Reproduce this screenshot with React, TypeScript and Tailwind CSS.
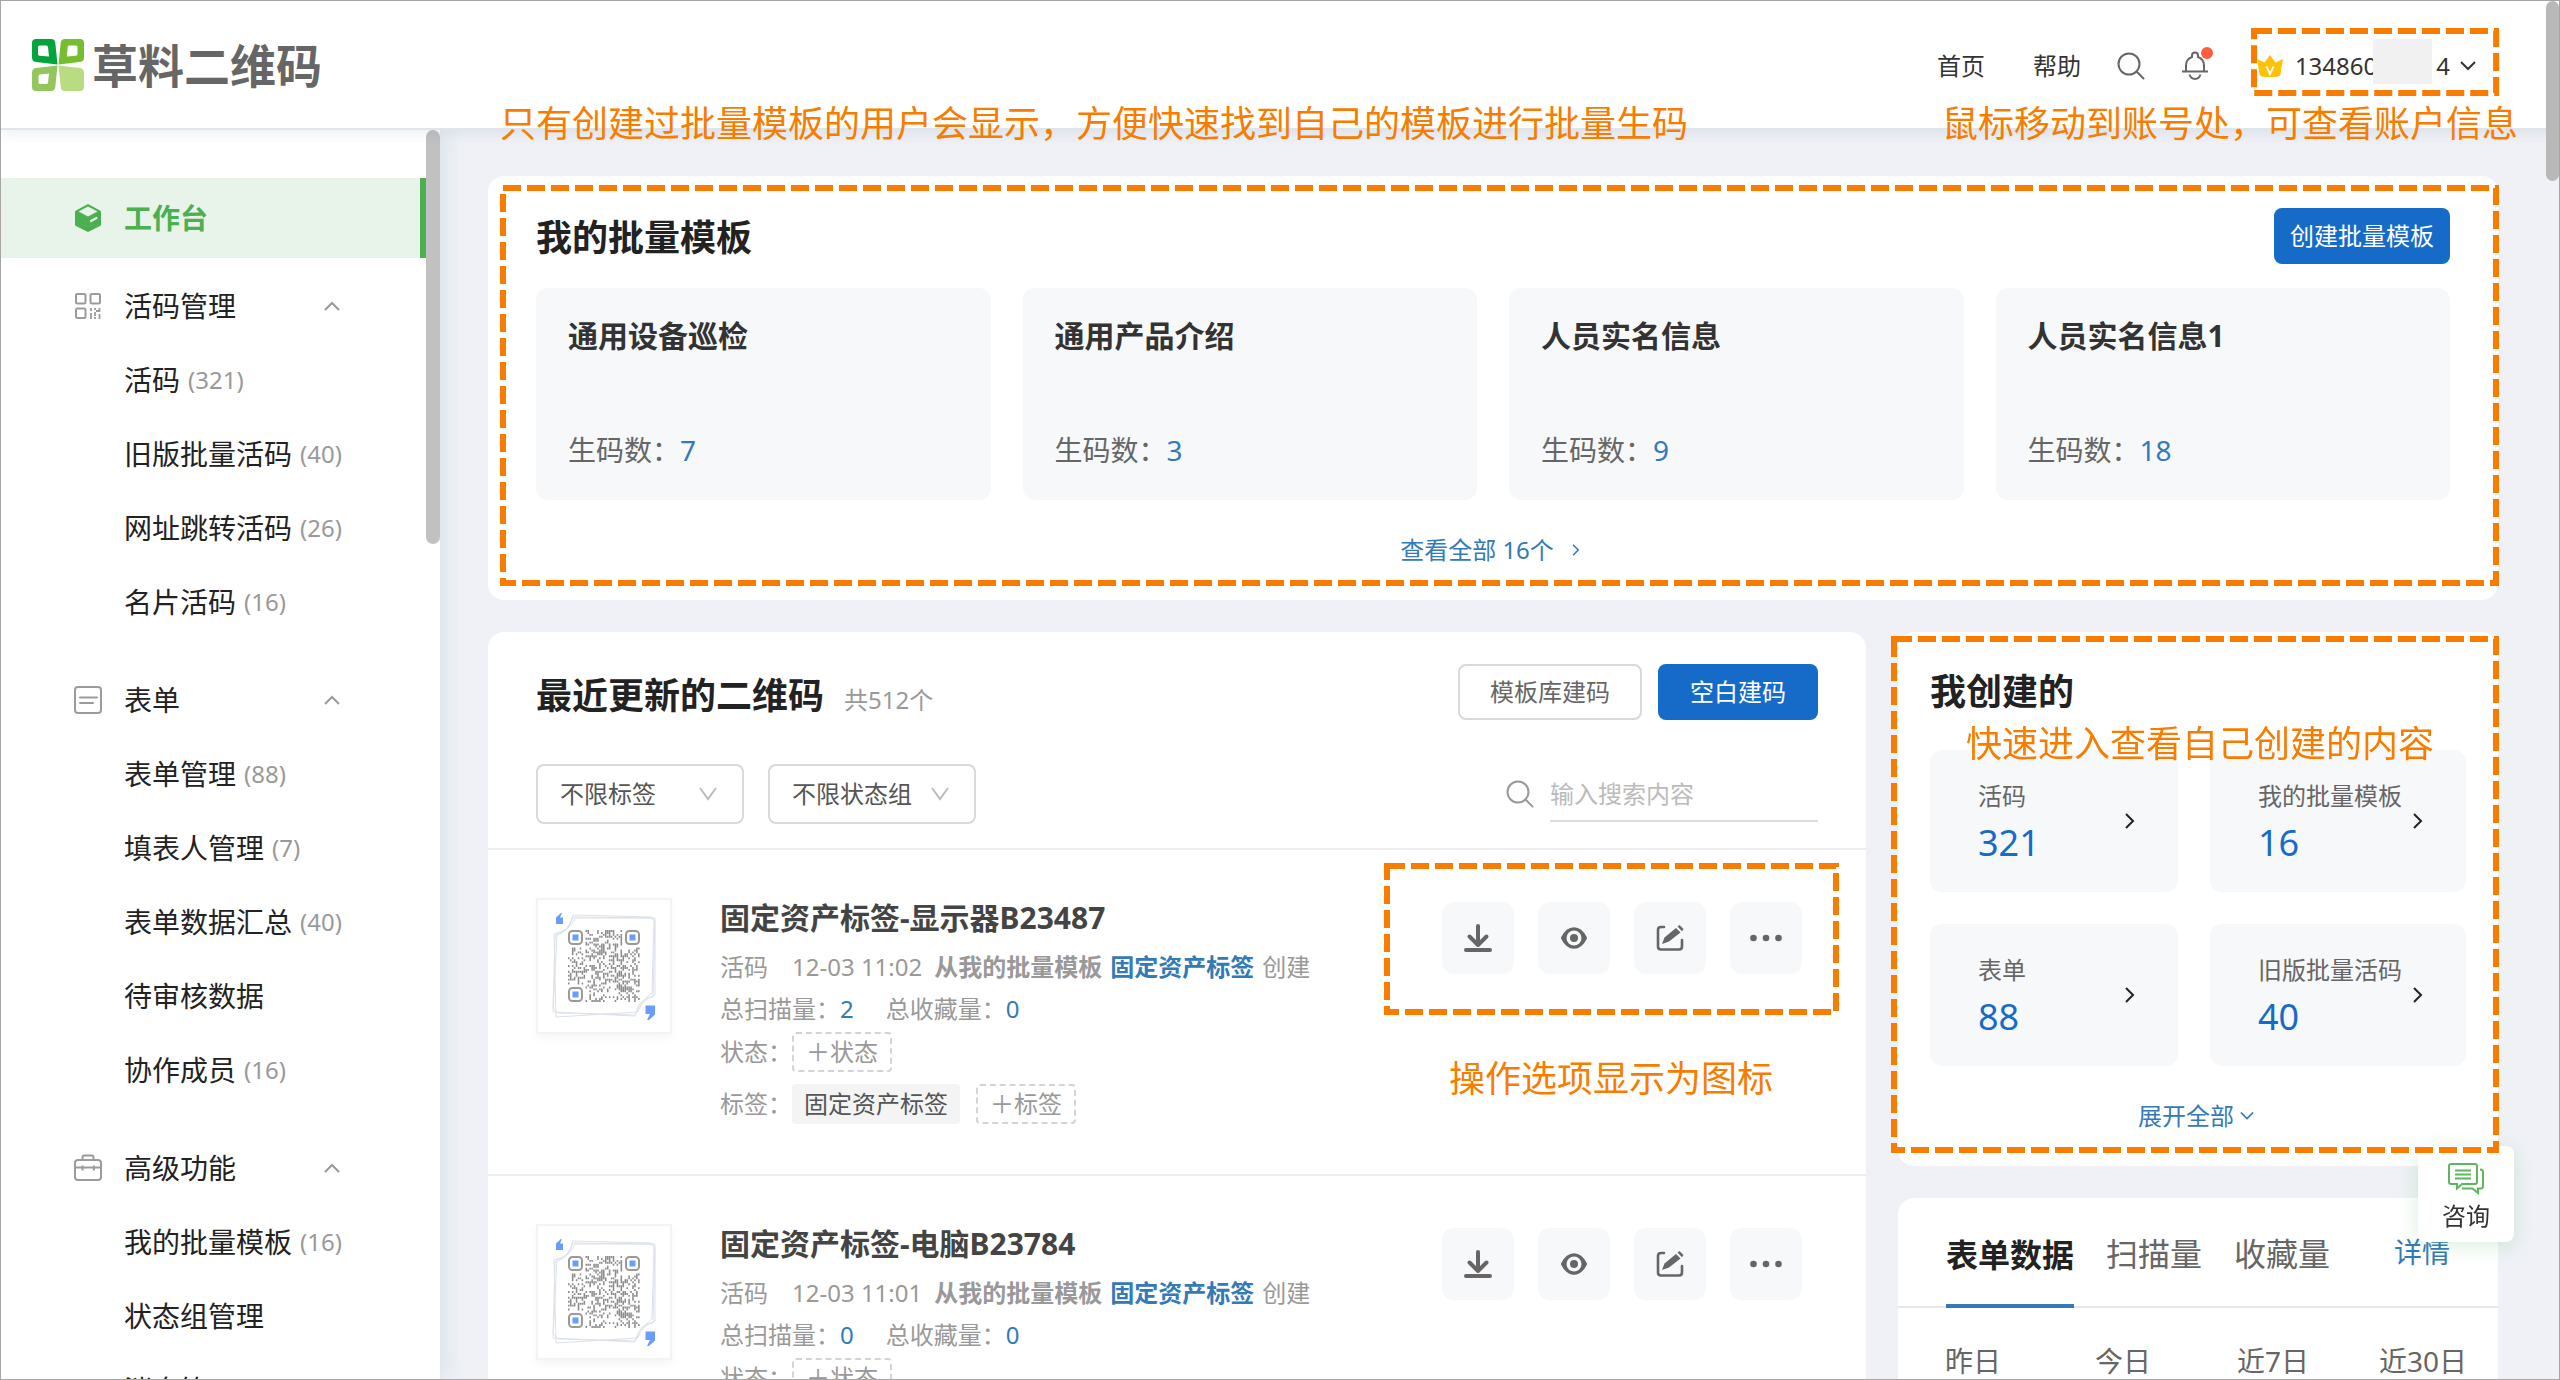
import type { ReactNode } from "react";

type NavItem = { label: string; count?: number };
type NavGroup = { label: string; icon: ReactNode; items: NavItem[] };

const NAV: NavGroup[] = [
  {
    label: "活码管理",
    icon: <CodeIcon />,
    items: [
      { label: "活码", count: 321 },
      { label: "旧版批量活码", count: 40 },
      { label: "网址跳转活码", count: 26 },
      { label: "名片活码", count: 16 },
    ],
  },
  {
    label: "表单",
    icon: <FormIcon />,
    items: [
      { label: "表单管理", count: 88 },
      { label: "填表人管理", count: 7 },
      { label: "表单数据汇总", count: 40 },
      { label: "待审核数据" },
      { label: "协作成员", count: 16 },
    ],
  },
  {
    label: "高级功能",
    icon: <ToolboxIcon />,
    items: [{ label: "我的批量模板", count: 16 }, { label: "状态组管理" }, { label: "消息箱" }],
  },
];

const TEMPLATES = [
  { name: "通用设备巡检", count: 7 },
  { name: "通用产品介绍", count: 3 },
  { name: "人员实名信息", count: 9 },
  { name: "人员实名信息1", count: 18 },
];

const CODES = [
  { name: "固定资产标签-显示器B23487", time: "12-03 11:02", scans: 2, favs: 0 },
  { name: "固定资产标签-电脑B23784", time: "12-03 11:01", scans: 0, favs: 0 },
];

const CREATED = [
  { label: "活码", count: 321 },
  { label: "我的批量模板", count: 16 },
  { label: "表单", count: 88 },
  { label: "旧版批量活码", count: 40 },
];

/* ---------- icons ---------- */

function Logo() {
  return (
    <svg viewBox="0 0 52 52" className="size-[52px] shrink-0" aria-hidden="true">
      <path fillRule="evenodd" fill="#04a43c" d="M4 0H19Q23 0 23.300 4L25.500 25.500L4 23Q0 22.500 0 18.500V4Q0 0 4 0ZM7.500 6.500Q6 6.500 6 8V15Q6 16.500 7.500 16.700L17 17.500L16 8Q15.800 6.500 14.500 6.500Z" />
      <path fillRule="evenodd" fill="#76be2f" d="M33 0H48Q52 0 52 4V18.500Q52 22.500 48 23L26.500 25.500L28.700 4Q29 0 33 0ZM37 6.500Q35.800 6.500 35.700 8L34.800 17.500L44 16.700Q45.500 16.500 45.500 15V8Q45.500 6.500 44 6.500Z" />
      <path fillRule="evenodd" fill="#93c65c" d="M25.500 26.500L23.300 48Q23 52 19 52H4Q0 52 0 48V33.500Q0 29.500 4 29ZM17 34.500L8 35.500Q6.500 35.800 6.500 37V43.500Q6.500 45 8 45H14.500Q15.800 45 16 43.500Z" />
      <path fill="#b9dc80" d="M26.500 26.500L48 29Q52 29.500 52 33.500V48Q52 52 48 52H33Q29 52 28.700 48Z" />
    </svg>
  );
}

function CubeIcon() {
  return (
    <svg viewBox="0 0 28 28" className="size-7 shrink-0" aria-hidden="true">
      <path fill="#4caf50" d="M14 0L26 6.500Q27 7 27 8V20.500Q27 21.500 26 22L14 28L2 22Q1 21.500 1 20.500V8Q1 7 2 6.500Z" />
      <path fill="#e8f3ea" d="M14 2.500L23.500 7.500L14 12.500L4.500 7.500Z" />
      <path stroke="#e8f3ea" strokeWidth="2.200" strokeLinecap="round" d="M17 17L22.500 14" />
    </svg>
  );
}

function CodeIcon() {
  return (
    <svg viewBox="0 0 28 28" className="size-7 shrink-0" fill="none" stroke="#9b9b9b" strokeWidth="2" aria-hidden="true">
      <rect x="2" y="2" width="9.500" height="9.500" rx="1.500" />
      <rect x="16.500" y="2" width="9.500" height="9.500" rx="1.500" />
      <rect x="2" y="16.500" width="9.500" height="9.500" rx="1.500" />
      <path d="M17 16v3M17 21v6M21 16v2M21 20v4M21 25v2M25.500 16v4M25.500 22v5M22 19h3" strokeWidth="1.800" />
    </svg>
  );
}

function FormIcon() {
  return (
    <svg viewBox="0 0 28 28" className="size-7 shrink-0" fill="none" stroke="#9b9b9b" strokeWidth="2" aria-hidden="true">
      <rect x="1" y="1" width="26" height="26" rx="3" />
      <path d="M6 11.500h17M6 17h13" strokeLinecap="round" />
    </svg>
  );
}

function ToolboxIcon() {
  return (
    <svg viewBox="0 0 28 28" className="size-7 shrink-0" fill="none" stroke="#9b9b9b" strokeWidth="2" aria-hidden="true">
      <rect x="1" y="6" width="26" height="20" rx="3" />
      <path d="M8.500 6V3q0-1.500 1.500-1.500h8q1.500 0 1.500 1.500v3M1 13.500h26M8.500 11.500v5M20 11.500v5" />
    </svg>
  );
}

function Chevron({ d, className }: { d: string; className: string }) {
  return (
    <svg viewBox="0 0 16 16" className={className} fill="none" stroke="currentColor" strokeWidth="2" aria-hidden="true">
      <path d={d} />
    </svg>
  );
}

const UP = "M1 12L8 5L15 12";
const DOWN = "M1 4L8 11L15 4";
const RIGHT = "M4 1L11 8L4 15";

function SearchIcon({ className }: { className: string }) {
  return (
    <svg viewBox="0 0 28 28" className={className} fill="none" stroke="currentColor" strokeWidth="2" aria-hidden="true">
      <circle cx="12" cy="12" r="10.500" />
      <path d="M19.500 19.500L26.500 26.500" strokeLinecap="round" />
    </svg>
  );
}

function BellIcon() {
  return (
    <svg viewBox="0 0 28 30" className="h-[30px] w-7" fill="none" stroke="#666" strokeWidth="2" aria-hidden="true">
      <path d="M5 20V14.500Q5 8 11 6V4.500Q11 1.500 14 1.500Q17 1.500 17 4.500V6Q23 8 23 14.500V20" />
      <path d="M1 20.500H27M8.500 23.500Q10 28 14 28Q18 28 19.500 23.500" />
    </svg>
  );
}

function CrownIcon() {
  return (
    <svg viewBox="0 0 26 22" className="h-[22px] w-[26px] shrink-0" aria-hidden="true">
      <path fill="#ffc107" d="M13 0L18.500 7.500L26 4L23.500 19Q23 21 21 21.500Q13 22.500 5 21.500Q3 21 2.500 19L0 4L7.500 7.500Z" />
      <path fill="none" stroke="#fff" strokeWidth="1.800" d="M9.500 11.500L13 19L16.500 11.500" />
    </svg>
  );
}

function ChatIcon() {
  return (
    <svg viewBox="0 0 36 32" className="h-8 w-9" fill="none" stroke="#5cb85f" strokeWidth="2" aria-hidden="true">
      <path d="M3 1H27Q29 1 29 3V19Q29 21 27 21H14L9 25.500V21H3Q1 21 1 19V3Q1 1 3 1Z" />
      <path d="M7 7.500H23M7 11.500H23M7 15.500H23M32 6.500Q35 6.500 35 9V23Q35 25.500 33 25.500H30V30L24.500 25.500H14" />
    </svg>
  );
}

const ACTIONS = [
  {
    label: "下载",
    icon: (
      <path d="M14 2V20M5.500 12.500L14 21L22.500 12.500M2 26H26" fill="none" stroke="#666" strokeWidth="4" strokeLinecap="round" strokeLinejoin="round" />
    ),
  },
  {
    label: "预览",
    icon: (
      <>
        <path d="M2.500 14Q7 4.800 14 4.800Q21 4.800 25.500 14Q21 23.200 14 23.200Q7 23.200 2.500 14Z" fill="#666" stroke="#666" strokeWidth="3" strokeLinejoin="round" />
        <circle cx="14" cy="14" r="7.500" fill="#f7f8fa" />
        <circle cx="14" cy="14" r="4" fill="#666" />
      </>
    ),
  },
  {
    label: "编辑",
    icon: (
      <>
        <path d="M8 3H5Q2 3 2 6V22.500Q2 25.500 5 25.500H23Q26 25.500 26 22.500V16" fill="none" stroke="#666" strokeWidth="2.600" strokeLinecap="round" />
        <path d="M20 4L24.500 8.500L13 17.500L6 20L8.500 13.500Z" fill="#666" />
        <path d="M21.500 2.500L23.500 1L27.500 5L26 7.300Z" fill="#666" />
      </>
    ),
  },
  {
    label: "更多",
    icon: (
      <g fill="#666">
        <circle cx="1.500" cy="14" r="3.300" />
        <circle cx="14" cy="14" r="3.300" />
        <circle cx="26.500" cy="14" r="3.300" />
      </g>
    ),
  },
];

// fixed-seed module pattern for the code thumbnails
const QR_SIZE = 37;
const QR_PATH = (() => {
  let seed = 20231;
  let d = "";
  for (let y = 0; y < QR_SIZE; y++) {
    for (let x = 0; x < QR_SIZE; x++) {
      seed = (seed * 1103515245 + 12345) % 2147483648;
      const corner = (x < 9 && y < 9) || (x > 27 && y < 9) || (x < 9 && y > 27);
      if (!corner && seed / 2147483648 < 0.4) d += `M${x} ${y}h.8v1h-.8z`;
    }
  }
  return d;
})();

function QrThumb() {
  return (
    <svg viewBox="0 0 132 132" className="size-[132px]" aria-hidden="true">
      <g fill="none" stroke="#dce1ea" strokeWidth="1">
        <path d="M35 15L113 17L117 22V95Q104 99 97 115L20 113L15 108L17 36Q31 32 35 15Z" />
        <path d="M37 18H112L116 20L114 93Q103 101 100 112L18 117L16 34Q33 30 37 18Z" />
        <path d="M35 17L117 18L115 97Q101 97 97 116L15 112L19 33Q30 34 35 17Z" />
      </g>
      <g transform="translate(30 30) scale(1.946)">
        <path d={QR_PATH} fill="#8c8c8c" />
      </g>
      {[
        [30, 30],
        [87, 30],
        [30, 87],
      ].map(([x, y]) => (
        <g key={`${x}-${y}`}>
          <rect x={x + 1} y={y + 1} width="13" height="13" rx="3.500" fill="#fff" stroke="#999" strokeWidth="2" />
          <rect x={x + 4.500} y={y + 4.500} width="6" height="6" fill="#6b9bff" />
        </g>
      ))}
      <path fill="#6b9bff" d="M18 24V17.500L23 13H24L22 17.500H25V24ZM107.500 105.500H117V114.500L111 120H109L112 114H107.500Z" />
    </svg>
  );
}

/* ---------- callouts ---------- */

function DashedBox({ className }: { className: string }) {
  return (
    <div className={`pointer-events-none absolute z-30 ${className}`}>
      <svg className="size-full overflow-visible" aria-hidden="true">
        <rect width="100%" height="100%" fill="none" stroke="#f77c00" strokeWidth="6" strokeDasharray="18 6" />
      </svg>
    </div>
  );
}

function Note({ className, children }: { className: string; children: ReactNode }) {
  return (
    <p className={`pointer-events-none absolute z-30 text-4xl leading-[48px] whitespace-nowrap text-[#f77c00] ${className}`}>
      {children}
    </p>
  );
}

/* ---------- page parts ---------- */

function Header() {
  return (
    <header className="relative z-20 flex h-[129px] shrink-0 items-center justify-between border-b-2 border-[#dfe5ea] bg-white pr-[83px] pl-[31px] shadow-[0_4px_12px_rgba(30,60,90,0.08)]">
      <a href="#home" className="flex items-center gap-2">
        <Logo />
        <span className="text-[46px] leading-[48px] font-bold text-[#666]">草料二维码</span>
      </a>
      <div className="flex items-center pt-[2px] text-2xl text-[#333]">
        <a href="#index" className="mr-12">首页</a>
        <a href="#help" className="mr-9">帮助</a>
        <button type="button" aria-label="搜索" className="mr-9 text-[#666]">
          <SearchIcon className="size-7" />
        </button>
        <button type="button" aria-label="通知" className="relative mr-12">
          <BellIcon />
          <span className="absolute -top-1 -right-1 size-3 rounded-full bg-[#ff5b41]" />
        </button>
        <button type="button" className="relative flex h-[62px] items-center">
          <CrownIcon />
          <span className="ml-3">134860</span>
          <span className="-mt-2 -ml-1 h-[45px] w-[59px] bg-[#f1f1f1]" />
          <span className="ml-1">4</span>
          <Chevron d={DOWN} className="ml-[10px] size-4" />
          <DashedBox className="-top-1 -right-5 bottom-1 -left-[3px]" />
        </button>
      </div>
      <Note className="top-[99px] left-[499px]">只有创建过批量模板的用户会显示，方便快速找到自己的模板进行批量生码</Note>
      <Note className="top-[99px] right-[41px]">鼠标移动到账号处，可查看账户信息</Note>
    </header>
  );
}

function Sidebar() {
  return (
    <aside className="relative z-10 flex w-[439px] shrink-0 overflow-hidden bg-white shadow-[6px_0_18px_rgba(170,200,205,0.3)]">
      <nav className="flex-1 pt-12 text-[28px] text-[#222]">
        <a href="#workbench" className="flex h-20 items-center gap-[22px] border-r-6 border-[#4caf50] bg-[#e8f3ea] pl-[73px] font-bold text-[#4caf50]">
          <CubeIcon />
          工作台
        </a>
        <div className="mt-[11px] flex flex-col gap-6">
          {NAV.map((g) => (
            <div key={g.label}>
              <button type="button" className="flex h-[74px] w-full items-center gap-[22px] pr-[86px] pl-[73px]">
                {g.icon}
                {g.label}
                <Chevron d={UP} className="ml-auto size-4 text-[#999]" />
              </button>
              {g.items.map((it) => (
                <a key={it.label} href="#nav" className="flex h-[74px] items-center pl-[123px]">
                  {it.label}
                  {it.count !== undefined && <span className="ml-2 text-2xl text-[#999]">({it.count})</span>}
                </a>
              ))}
            </div>
          ))}
        </div>
      </nav>
      <div className="h-[414px] w-[14px] rounded-full bg-[#c1c1c1]" />
    </aside>
  );
}

function Templates() {
  return (
    <section className="relative rounded-2xl bg-white px-12 pt-8">
      <DashedBox className="top-3 right-[2px] bottom-[17px] left-[15px]" />
      <div className="flex h-14 items-center justify-between">
        <h2 className="pt-1 text-4xl font-bold text-[#222]">我的批量模板</h2>
        <button type="button" className="h-14 rounded-lg bg-[#176bc8] px-4 text-2xl text-white">创建批量模板</button>
      </div>
      <div className="mt-6 grid grid-cols-4 gap-8">
        {TEMPLATES.map((t) => (
          <a key={t.name} href="#template" className="flex h-[212px] flex-col justify-between rounded-xl bg-[#f7f8fa] p-8">
            <h3 className="text-3xl leading-8 font-bold text-[#333]">{t.name}</h3>
            <p className="text-[28px] leading-9 text-[#666]">
              生码数：<span className="text-[#337ab7]">{t.count}</span>
            </p>
          </a>
        ))}
      </div>
      <div className="flex h-[100px] items-center justify-center">
        <a href="#all" className="flex items-center gap-4 pr-1 text-2xl text-[#337ab7]">
          查看全部 16个
          <Chevron d={RIGHT} className="size-3" />
        </a>
      </div>
    </section>
  );
}

function Filter({ id, label }: { id: string; label: string }) {
  return (
    <div className="relative">
      <select id={id} aria-label={label} className="h-[60px] w-52 appearance-none rounded-lg border-2 border-[#d9d9d9] bg-white pl-[22px] text-2xl text-[#555]">
        <option>{label}</option>
      </select>
      <svg viewBox="0 0 18 14" className="pointer-events-none absolute top-[23px] right-[27px] h-[14px] w-[18px]" fill="none" stroke="#bbb" strokeWidth="2" aria-hidden="true">
        <path d="M1 1L9 12L17 1" />
      </svg>
    </div>
  );
}

function CodeRow({ code, annotated }: { code: (typeof CODES)[number]; annotated: boolean }) {
  return (
    <li className="relative flex border-t-2 border-[#ebedf0] pt-12 pr-16 pb-[50px] pl-12">
      <div className="size-[136px] shrink-0 border-2 border-[#f3f3f3] shadow-[0_4px_8px_rgba(0,0,0,0.04)]">
        <QrThumb />
      </div>
      <div className="ml-12 flex-1 text-2xl text-[#999]">
        <h3 className="mb-2 text-3xl leading-10 font-bold text-[#444]">{code.name}</h3>
        <p className="flex gap-2 leading-[42px]">
          <span className="mr-4">活码</span>
          <span className="mr-1">{code.time}</span>
          <span className="font-bold">从我的批量模板</span>
          <a href="#template" className="font-bold text-[#337ab7]">固定资产标签</a>
          <span>创建</span>
        </p>
        <p className="flex gap-8 leading-[42px]">
          <span>总扫描量：<b className="font-normal text-[#337ab7]">{code.scans}</b></span>
          <span>总收藏量：<b className="font-normal text-[#337ab7]">{code.favs}</b></span>
        </p>
        <div className="mt-[2px] flex h-10 items-center">
          <span className="w-[72px]">状态：</span>
          <button type="button" className="h-10 rounded border-2 border-dashed border-[#d4d4d4] px-3 leading-9">＋状态</button>
        </div>
        <div className="mt-3 flex h-10 items-center">
          <span className="w-[72px]">标签：</span>
          <span className="mr-4 h-10 rounded bg-[#f4f4f4] px-3 leading-10 text-[#555]">固定资产标签</span>
          <button type="button" className="h-10 rounded border-2 border-dashed border-[#d4d4d4] px-3 leading-9">＋标签</button>
        </div>
      </div>
      <div className="relative mt-1 flex h-[72px] gap-6">
        {ACTIONS.map((a) => (
          <button key={a.label} type="button" aria-label={a.label} className="flex size-[72px] items-center justify-center rounded-xl bg-[#f7f8fa]">
            <svg viewBox="0 0 28 28" className="size-7 overflow-visible" aria-hidden="true">{a.icon}</svg>
          </button>
        ))}
        {annotated && (
          <>
            <DashedBox className="-top-9 -right-[34px] -bottom-[38px] -left-[55px]" />
            <Note className="top-[153px] left-[7px]">操作选项显示为图标</Note>
          </>
        )}
      </div>
    </li>
  );
}

function RecentCodes() {
  return (
    <section className="min-w-0 flex-1 rounded-2xl bg-white">
      <div className="px-12 pt-8 pb-6">
        <div className="flex h-14 items-center gap-4">
          <div className="mr-auto flex items-baseline gap-5 pt-2">
            <h2 className="text-4xl leading-[44px] font-bold text-[#222]">最近更新的二维码</h2>
            <span className="text-2xl text-[#999]">共512个</span>
          </div>
          <button type="button" className="h-14 w-[184px] rounded-lg border-2 border-[#d9d9d9] text-2xl text-[#666]">模板库建码</button>
          <button type="button" className="h-14 w-40 rounded-lg bg-[#176bc8] text-2xl text-white">空白建码</button>
        </div>
        <div className="mt-11 flex h-[60px] items-center gap-6">
          <Filter id="tag" label="不限标签" />
          <Filter id="status" label="不限状态组" />
          <label className="ml-auto flex items-center gap-4">
            <SearchIcon className="size-7 text-[#999]" />
            <input type="search" aria-label="搜索" placeholder="输入搜索内容" className="h-14 w-[268px] border-b-2 border-[#d9dde3] bg-transparent text-2xl placeholder:text-[#bbb]" />
          </label>
        </div>
      </div>
      <ul>
        {CODES.map((c, i) => (
          <CodeRow key={c.name} code={c} annotated={i === 0} />
        ))}
      </ul>
    </section>
  );
}

function Created() {
  return (
    <section className="relative rounded-2xl bg-white px-8 pt-9">
      <DashedBox className="top-[7px] right-[2px] bottom-4 -left-1" />
      <Note className="top-[88px] left-[68px]">快速进入查看自己创建的内容</Note>
      <h2 className="text-4xl leading-[48px] font-bold text-[#222]">我创建的</h2>
      <div className="mt-[34px] grid grid-cols-[31fr_32fr] gap-8">
        {CREATED.map((c) => (
          <a key={c.label} href="#created" className="flex h-[142px] items-center justify-between rounded-xl bg-[#f7f8fa] pr-10 pl-12">
            <div className="whitespace-nowrap">
              <p className="text-2xl leading-[44px] text-[#666]">{c.label}</p>
              <p className="text-4xl leading-[50px] text-[#176bc8]">{c.count}</p>
            </div>
            <Chevron d={RIGHT} className="size-4 shrink-0 text-[#222]" />
          </a>
        ))}
      </div>
      <div className="flex h-[100px] items-center justify-center">
        <button type="button" className="flex items-center gap-[6px] pr-1 text-2xl text-[#337ab7]">
          展开全部
          <Chevron d={DOWN} className="size-[14px]" />
        </button>
      </div>
    </section>
  );
}

function FormStats() {
  return (
    <section className="rounded-2xl bg-white">
      <div className="flex items-center gap-8 border-b-2 border-[#e5e7ea] px-12 text-[32px] text-[#666]">
        <button type="button" className="-mb-[2px] h-[110px] border-b-4 border-[#337ab7] pt-2 font-bold text-[#222]">表单数据</button>
        <button type="button" className="pt-1">扫描量</button>
        <button type="button" className="pt-1">收藏量</button>
        <a href="#detail" className="ml-auto text-[28px] text-[#337ab7]">详情</a>
      </div>
      <div className="grid h-[300px] grid-cols-4 text-center text-[28px] leading-[106px] text-[#666]">
        <span>昨日</span>
        <span>今日</span>
        <span>近7日</span>
        <span>近30日</span>
      </div>
    </section>
  );
}

export default function App() {
  return (
    <div className="relative flex h-screen flex-col overflow-hidden border border-[#a6a6a6] bg-[#eff1f6] font-['Noto_Sans','Noto_Sans_CJK_SC',sans-serif]">
      <Header />
      <div className="flex min-h-0 flex-1">
        <Sidebar />
        <main className="min-w-0 flex-1 overflow-hidden pt-[46px] pr-[61px] pl-12">
          <Templates />
          <div className="mt-8 flex items-start gap-8">
            <RecentCodes />
            <div className="flex w-[600px] shrink-0 flex-col gap-8">
              <Created />
              <FormStats />
            </div>
          </div>
        </main>
      </div>
      <button type="button" className="fixed right-[46px] bottom-[138px] z-20 flex size-24 flex-col items-center rounded-lg bg-white pt-[17px] text-2xl text-[#333] shadow-[0_4px_20px_rgba(76,175,80,0.2)]">
        <ChatIcon />
        <span className="mt-1 leading-[34px]">咨询</span>
      </button>
      <div className="absolute top-0 right-0 z-40 h-[180px] w-[13px] rounded-full bg-[#b8b8b8]" />
    </div>
  );
}
